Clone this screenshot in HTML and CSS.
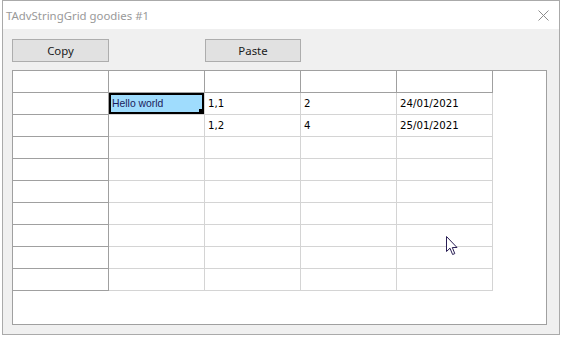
FILE: index.html
```html
<!DOCTYPE html>
<html lang="en">
<head>
    <meta charset="UTF-8">
    <title>TAdvStringGrid goodies #1</title>
    <link rel="stylesheet" href="styles.css">
</head>
<body>
    <div class="window">
        <div class="titlebar">
            <span class="title">TAdvStringGrid goodies #1</span>
            <svg class="close" width="11" height="11" viewBox="0 0 11 11">
                <path d="M0.5 0.5 L10.5 10.5 M10.5 0.5 L0.5 10.5" stroke="#8c8c8c" stroke-width="1" fill="none"/>
            </svg>
        </div>
        <div class="client">
            <div class="buttons">
                <button class="btn">Copy</button>
                <button class="btn btn-paste">Paste</button>
            </div>
            <div class="grid-panel">
                <div class="grid">
                    <div class="row fixed-row">
                        <div class="cell fixed"></div><div class="cell"></div><div class="cell"></div><div class="cell"></div><div class="cell"></div>
                    </div>
                    <div class="row">
                        <div class="cell fixed"></div>
                        <div class="cell selected">Hello world<span class="handle"></span></div>
                        <div class="cell">1,1</div><div class="cell">2</div><div class="cell">24/01/2021</div>
                    </div>
                    <div class="row">
                        <div class="cell fixed"></div><div class="cell"></div>
                        <div class="cell">1,2</div><div class="cell">4</div><div class="cell">25/01/2021</div>
                    </div>
                    <div class="row"><div class="cell fixed"></div><div class="cell"></div><div class="cell"></div><div class="cell"></div><div class="cell"></div></div>
                    <div class="row"><div class="cell fixed"></div><div class="cell"></div><div class="cell"></div><div class="cell"></div><div class="cell"></div></div>
                    <div class="row"><div class="cell fixed"></div><div class="cell"></div><div class="cell"></div><div class="cell"></div><div class="cell"></div></div>
                    <div class="row"><div class="cell fixed"></div><div class="cell"></div><div class="cell"></div><div class="cell"></div><div class="cell"></div></div>
                    <div class="row"><div class="cell fixed"></div><div class="cell"></div><div class="cell"></div><div class="cell"></div><div class="cell"></div></div>
                    <div class="row"><div class="cell fixed"></div><div class="cell"></div><div class="cell"></div><div class="cell"></div><div class="cell"></div></div>
                    <div class="row"><div class="cell fixed"></div><div class="cell"></div><div class="cell"></div><div class="cell"></div><div class="cell"></div></div>
                </div>
                <svg class="cursor" width="13" height="20" viewBox="0 0 13 20">
                    <path d="M0.5 0.5 L0.5 15.5 L4 12.2 L6.6 18.5 L8.8 17.6 L6.3 11.5 L11 11.5 Z" fill="#fff" stroke="#2a1f55" stroke-width="1" stroke-linejoin="miter"/>
                </svg>
            </div>
        </div>
    </div>
</body>
</html>
```

FILE: styles.css
```css
body {
    margin: 0;
    background-color: #ffffff;
    font-family: "Liberation Sans", Arial, sans-serif;
}
.window {
    margin-left: 2px;
    width: 558px;
    height: 335px;
    box-sizing: border-box;
    border: 1px solid #aaaaaa;
    background-color: #f0f0f0;
    display: flex;
    flex-direction: column;
}
.titlebar {
    height: 28px;
    background-color: #ffffff;
    display: flex;
    align-items: center;
    justify-content: space-between;
    padding: 0 10px 0 3px;
}
.title {
    font-family: "Noto Sans", "Open Sans", sans-serif;
    font-size: 11.4px;
    color: #999999;
}
.client {
    flex: 1;
    padding: 10px 12px 9px 9px;
    display: flex;
    flex-direction: column;
}
.buttons {
    display: flex;
    height: 23px;
    margin-bottom: 8px;
}
.btn {
    width: 97px;
    height: 23px;
    margin: 0;
    padding: 0;
    border: 1px solid #adadad;
    background-color: #e1e1e1;
    font-family: "Noto Sans", "Open Sans", sans-serif;
    font-size: 11.4px;
    color: #1a1a1a;
}
.btn-paste {
    width: 96px;
    margin-left: 96px;
}
.grid-panel {
    position: relative;
    flex: 1;
    border: 1px solid #a0a0a0;
    background-color: #ffffff;
}
.grid {
    display: flex;
    flex-direction: column;
}
.row {
    display: flex;
}
.cell {
    position: relative;
    box-sizing: border-box;
    width: 96px;
    height: 22px;
    border-right: 1px solid #d4d4d4;
    border-bottom: 1px solid #d4d4d4;
    padding-left: 3px;
    font-family: "DejaVu Sans", sans-serif;
    font-size: 10.2px;
    line-height: 21px;
    color: #000000;
    white-space: nowrap;
}
.cell.fixed {
    border-right-color: #a0a0a0;
    border-bottom-color: #a0a0a0;
}
.fixed-row .cell {
    border-right-color: #a0a0a0;
    border-bottom-color: #a0a0a0;
}
.cell.selected {
    background-color: #9fdcfd;
    box-shadow: inset 0 0 0 2px #000000;
    padding-left: 3px;
    color: #1b1b5a;
    font-family: "Liberation Sans", Arial, sans-serif;
    font-size: 10.4px;
}
.handle {
    position: absolute;
    right: 1px;
    bottom: 1px;
    width: 4px;
    height: 4px;
    background-color: #000000;
}
.cursor {
    position: absolute;
    left: 433px;
    top: 165px;
}
```
